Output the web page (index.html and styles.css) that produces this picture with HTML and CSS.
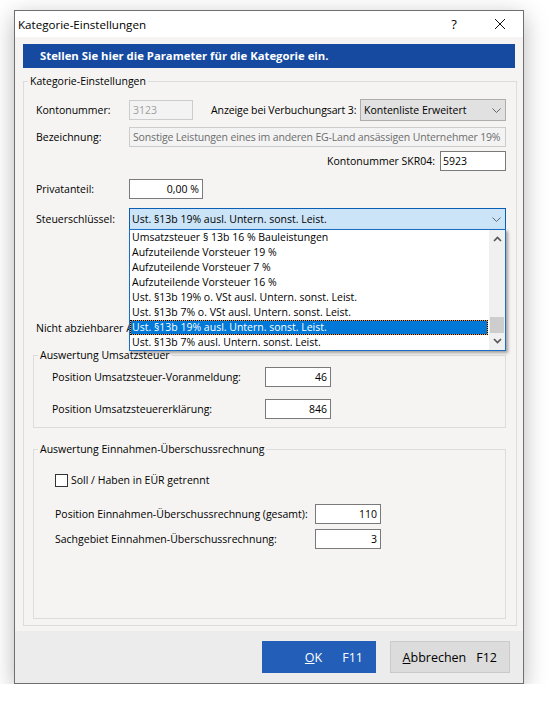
FILE: index.html
```html
<!DOCTYPE html>
<html lang="de">
<head>
    <meta charset="UTF-8">
    <meta name="viewport" content="width=device-width, initial-scale=1.0">
    <title>Kategorie-Einstellungen</title>
    <link rel="stylesheet" href="styles.css">
</head>
<body>
    <div class="win">
        <!-- Titelleiste -->
        <div class="titlebar">
            <span class="title">Kategorie-Einstellungen</span>
            <span class="capbtn cap-help">?</span>
            <span class="capbtn cap-close">
                <svg width="10" height="10" viewBox="0 0 10 10"><path d="M0 0L10 10M10 0L0 10" stroke="#111" stroke-width="1" fill="none"/></svg>
            </span>
        </div>

        <div class="client">
            <div class="banner">Stellen Sie hier die Parameter für die Kategorie ein.</div>

            <fieldset class="grp grp-main">
                <legend>Kategorie-Einstellungen</legend>

                <div class="row r-konto">
                    <span class="lbl">Kontonummer:</span>
                    <div class="ed ed-off ed-konto">3123</div>
                    <span class="lbl-anz">Anzeige bei Verbuchungsart 3:</span>
                    <div class="sel sel-anz">
                        <span class="sel-txt">Kontenliste Erweitert</span>
                        <svg class="chev" width="9" height="5" viewBox="0 0 9 5"><polyline points="0.5,0.5 4.5,4.5 8.5,0.5" fill="none" stroke="#666"/></svg>
                    </div>
                </div>

                <div class="row r-bez">
                    <span class="lbl">Bezeichnung:</span>
                    <div class="ed ed-off ed-bez">Sonstige Leistungen eines im anderen EG-Land ansässigen Unternehmer 19%</div>
                </div>

                <div class="row r-skr">
                    <span class="lbl-skr">Kontonummer SKR04:</span>
                    <div class="ed ed-skr">5923</div>
                </div>

                <div class="row r-priv">
                    <span class="lbl">Privatanteil:</span>
                    <div class="ed ed-num ed-priv">0,00 %</div>
                </div>

                <div class="row r-steuer">
                    <span class="lbl">Steuerschlüssel:</span>
                    <div class="combo">
                        <div class="sel sel-steuer">
                            <span class="sel-txt">Ust. §13b 19% ausl. Untern. sonst. Leist.</span>
                            <svg class="chev" width="9" height="5" viewBox="0 0 9 5"><polyline points="0.5,0.5 4.5,4.5 8.5,0.5" fill="none" stroke="#666"/></svg>
                        </div>
                        <!-- aufgeklappte Liste -->
                        <div class="droplist">
                            <ul class="items">
                                <li>Umsatzsteuer § 13b 16 % Bauleistungen</li>
                                <li>Aufzuteilende Vorsteuer 19 %</li>
                                <li>Aufzuteilende Vorsteuer 7 %</li>
                                <li>Aufzuteilende Vorsteuer 16 %</li>
                                <li>Ust. §13b 19% o. VSt ausl. Untern. sonst. Leist.</li>
                                <li>Ust. §13b 7% o. VSt ausl. Untern. sonst. Leist.</li>
                                <li class="on">Ust. §13b 19% ausl. Untern. sonst. Leist.</li>
                                <li>Ust. §13b 7% ausl. Untern. sonst. Leist.</li>
                            </ul>
                            <div class="vscroll">
                                <svg class="arr" width="9" height="6" viewBox="0 0 9 6"><polyline points="1,5 4.5,1.5 8,5" fill="none" stroke="#555" stroke-width="1.6"/></svg>
                                <div class="thumb"></div>
                                <svg class="arr" width="9" height="6" viewBox="0 0 9 6"><polyline points="1,1 4.5,4.5 8,1" fill="none" stroke="#555" stroke-width="1.6"/></svg>
                            </div>
                        </div>
                    </div>
                </div>

                <div class="row r-nab">
                    <span class="lbl-nab">Nicht abziehbarer Anteil:</span>
                    <div class="ed ed-num ed-nab"></div>
                </div>

                <fieldset class="grp grp-ust">
                    <legend>Auswertung Umsatzsteuer</legend>
                    <div class="row r-ust1">
                        <span class="lbl-ust">Position Umsatzsteuer-Voranmeldung:</span>
                        <div class="ed ed-num ed-pos">46</div>
                    </div>
                    <div class="row r-ust2">
                        <span class="lbl-ust">Position Umsatzsteuererklärung:</span>
                        <div class="ed ed-num ed-pos">846</div>
                    </div>
                </fieldset>

                <fieldset class="grp grp-eur">
                    <legend>Auswertung Einnahmen-Überschussrechnung</legend>
                    <div class="row r-chk">
                        <span class="chk"></span>
                        <span>Soll / Haben in EÜR getrennt</span>
                    </div>
                    <div class="row r-eur1">
                        <span class="lbl-eur">Position Einnahmen-Überschussrechnung (gesamt):</span>
                        <div class="ed ed-num ed-pos">110</div>
                    </div>
                    <div class="row r-eur2">
                        <span class="lbl-eur">Sachgebiet Einnahmen-Überschussrechnung:</span>
                        <div class="ed ed-num ed-pos">3</div>
                    </div>
                </fieldset>
            </fieldset>
        </div>

        <!-- Schaltflächen unten -->
        <div class="footer">
            <div class="btn btn-ok"><span><u>O</u>K</span><span class="key">F11</span></div>
            <div class="btn btn-cancel"><span><u>A</u>bbrechen</span><span class="key">F12</span></div>
        </div>
    </div>
</body>
</html>
```

FILE: styles.css
```css
/* Grundeinstellungen */
html, body{
    margin: 0;
    padding: 0;
}
body{
    background: #fff;
    color: #000;
    font-family: "Open Sans", "Noto Sans", sans-serif;
    font-size: 10.5px;
    line-height: 15px;
}

/* Dialogfenster */
.win{
    width: 508px;
    height: 672px;
    margin: 10px 0 0 14px;
    border: 1px solid #6f6f6f;
    background: #f5f4f2;
    display: flex;
    flex-direction: column;
    box-shadow: 0 6px 22px rgba(0,0,0,.28);
}

/* Titelleiste */
.titlebar{
    height: 26px;
    background: #fff;
    display: flex;
    align-items: center;
}
.title{
    flex: 1;
    padding-left: 3px;
    font-size: 11.6px;
}
.capbtn{
    width: 46px;
    height: 26px;
    display: flex;
    align-items: center;
    justify-content: center;
}
.cap-help{
    font-size: 13px;
}

/* Inhalt */
.client{
    flex: 1;
    display: flex;
    flex-direction: column;
    padding: 7px 6px 5px 8px;
}
.banner{
    height: 24px;
    margin-right: 2px;
    padding-left: 17px;
    background: #154aa0;
    color: #fff;
    font-size: 11.3px;
    font-weight: bold;
    line-height: 24px;
}

/* Gruppenrahmen */
.grp{
    margin: 0;
    padding: 0;
    min-width: 0;
    border: 1px solid #dcdcdc;
    display: flex;
    flex-direction: column;
}
.grp legend{
    margin-left: 4px;
    padding: 0 2px;
    line-height: 15px;
}
.grp-main{
    flex: 1;
    margin-top: 6px;
}
.grp-ust{
    margin: 10px 10px 0 9px;
    padding-bottom: 8px;
}
.grp-eur{
    flex: 1;
    margin: 14px 10px 6px 9px;
}

/* Zeilen */
.row{
    display: flex;
    align-items: center;
}
.lbl{
    width: 93px;
    padding-left: 12px;
    flex: none;
}
.r-konto{
    margin-top: 10px;
    height: 22px;
    padding-right: 10px;
}
.r-bez{
    margin-top: 6px;
    padding-right: 10px;
}
.r-skr{
    margin-top: 4px;
    padding-right: 10px;
    justify-content: flex-end;
}
.r-priv{
    margin-top: 8px;
}
.r-steuer{
    margin-top: 9px;
    padding-right: 10px;
}
.r-nab{
    margin-top: 88px;
    height: 20px;
}
/* Beschriftung endet unter der Liste */
.lbl-nab{
    padding-left: 12px;
    width: 93px;
    flex: none;
    white-space: nowrap;
    overflow: hidden;
}

.lbl-anz{
    margin-left: 18px;
    letter-spacing: -0.1px;
    white-space: nowrap;
}
.lbl-skr{
    margin-right: 5px;
}

/* Eingabefelder */
.ed{
    height: 18px;
    border: 1px solid #7a7a7a;
    background: #fff;
    padding: 0 3px;
    line-height: 18px;
    white-space: nowrap;
    overflow: hidden;
    box-sizing: content-box;
}
.ed-off{
    border-color: #cccccc;
    background: #f3f3f3;
    color: #6d6d6d;
}
.ed-num{
    text-align: right;
}
.ed-konto{
    width: 56px;
    color: #a0a0a0;
}
.ed-bez{
    flex: 1;
    letter-spacing: -0.16px;
}
.ed-skr{
    width: 59px;
    padding-left: 2px;
}
.ed-priv{
    width: 66px;
}
.ed-nab{
    width: 66px;
}

/* Auswahlfelder */
.sel{
    height: 20px;
    border: 1px solid #adadad;
    background: #e1e1e1;
    display: flex;
    align-items: center;
    padding: 0 4px 0 3px;
}
.sel-txt{
    flex: 1;
    white-space: nowrap;
}
.sel-anz{
    width: 137px;
    margin-left: auto;
}
.combo{
    flex: 1;
    position: relative;
}
.sel-steuer{
    border-color: #0a5fb4;
    background: #cce4f7;
    padding-left: 2px;
}

/* aufgeklappte Liste */
.droplist{
    position: absolute;
    left: 0;
    right: 0;
    top: 21px;
    z-index: 5;
    display: flex;
    border: 1px solid #1a6fc4;
    background: #fff;
    box-shadow: 2px 2px 3px rgba(0,0,0,.35);
}
.items{
    flex: 1;
    margin: 0;
    padding: 0;
    list-style: none;
}
.items li{
    height: 15px;
    padding-left: 2px;
    white-space: nowrap;
    line-height: 15px;
}
.items li.on{
    margin-right: 1px;
    background: #0078d7;
    color: #fff;
    box-shadow: inset 0 0 0 1px #f0a040;
    outline: 1px dotted #000;
    outline-offset: -1px;
}
.vscroll{
    width: 16px;
    background: #f0f0f0;
    display: flex;
    flex-direction: column;
    align-items: center;
}
.vscroll .arr{
    margin-top: 6px;
}
.vscroll .arr:last-child{
    margin-top: auto;
    margin-bottom: 6px;
}
.thumb{
    width: 14px;
    height: 16px;
    margin-top: 75px;
    background: #cdcdcd;
}

/* Umsatzsteuer-Gruppe */
.lbl-ust{
    width: 213px;
    padding-left: 18px;
}
.ed-pos{
    width: 58px;
}
.r-ust1{
    margin-top: 4px;
}
.r-ust2{
    margin-top: 12px;
}

/* EÜR-Gruppe */
.r-chk{
    margin-top: 16px;
    padding-left: 21px;
}
.chk{
    width: 11px;
    height: 11px;
    border: 1px solid #333;
    background: #fff;
    margin-right: 3px;
}
.lbl-eur{
    width: 260px;
    padding-left: 21px;
}
.r-eur1{
    margin-top: 16px;
}
.r-eur2{
    margin-top: 5px;
}

/* Fußleiste mit Schaltflächen */
.footer{
    height: 52px;
    background: #ececec;
    display: flex;
    justify-content: flex-end;
    align-items: flex-start;
    padding: 10px 13px 0 0;
    box-sizing: border-box;
    gap: 14px;
}
.btn{
    height: 32px;
    box-sizing: border-box;
    display: flex;
    align-items: center;
    justify-content: flex-end;
    font-size: 12.5px;
}
.btn-ok{
    width: 114px;
    padding-right: 13px;
    background: #235fb8;
    color: #fff;
}
.btn-ok .key{
    margin-left: 20px;
}
.btn-cancel{
    width: 120px;
    padding-right: 12px;
    border: 1px solid #cacaca;
    background: #dcdcdc;
}
.btn-cancel .key{
    margin-left: 10px;
}
```
